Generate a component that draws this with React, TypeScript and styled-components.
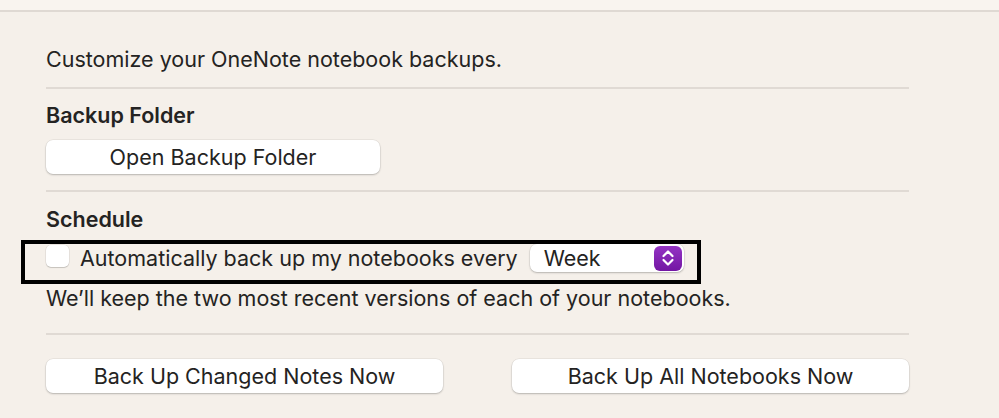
import { FC } from 'react';
import styled, { createGlobalStyle } from 'styled-components';

const GlobalStyle = createGlobalStyle`
  html, body {
    margin: 0;
    padding: 0;
    background: #f5f0ea;
  }
  body {
    font-family: Inter, "Noto Sans", sans-serif;
    color: #242322;
    -webkit-font-smoothing: antialiased;
  }
`;

const App: FC = () => {
  return (
    <Page>
      <GlobalStyle />
      <TopBand />
      <Content>
        <Intro>Customize your OneNote notebook backups.</Intro>
        <Divider />
        <SectionTitle>Backup Folder</SectionTitle>
        <PushButton $width="334px">Open Backup Folder</PushButton>
        <Divider $top="16px" />
        <SectionTitle $top="13px">Schedule</SectionTitle>
        <Highlight>
          <Checkbox type="checkbox" />
          <RowLabel>Automatically back up my notebooks every</RowLabel>
          <Select>
            <SelectValue>Week</SelectValue>
            <Stepper>
              <svg width="16" height="20" viewBox="0 0 16 20" fill="none">
                <path d="M3.5 8 L8 3.5 L12.5 8" stroke="#fff" strokeWidth="2.2" strokeLinecap="round" strokeLinejoin="round" />
                <path d="M3.5 12 L8 16.5 L12.5 12" stroke="#fff" strokeWidth="2.2" strokeLinecap="round" strokeLinejoin="round" />
              </svg>
            </Stepper>
          </Select>
        </Highlight>
        <Note>We’ll keep the two most recent versions of each of your notebooks.</Note>
        <Divider $top="21px" />
        <Actions>
          <PushButton>Back Up Changed Notes Now</PushButton>
          <PushButton>Back Up All Notebooks Now</PushButton>
        </Actions>
      </Content>
    </Page>
  );
};

export default App;

const Page = styled.div`
  width: 999px;
  height: 418px;
  overflow: hidden;
  background: #f5f0ea;
`;

const TopBand = styled.div`
  height: 10px;
  background: #f9f4ef;
  border-bottom: 2px solid #dfd9d3;
`;

const Content = styled.div`
  width: 863px;
  padding: 33px 0 0 46px;
  display: flex;
  flex-direction: column;
  align-items: flex-start;
`;

const Intro = styled.p`
  margin: 0;
  font-size: 21.5px;
  line-height: 28px;
`;

const Divider = styled.hr<{ $top?: string }>`
  align-self: stretch;
  margin: ${({ $top }) => $top ?? '14px'} 0 0;
  border: none;
  height: 2px;
  background: #e0dad4;
`;

const SectionTitle = styled.h3<{ $top?: string }>`
  margin: ${({ $top }) => $top ?? '12px'} 0 0;
  font-size: 21.5px;
  line-height: 28px;
  font-weight: 600;
`;

const PushButton = styled.button<{ $width?: string }>`
  width: ${({ $width }) => $width ?? '100%'};
  height: 34px;
  margin-top: 11px;
  padding: 0;
  background: #fff;
  border: none;
  border-radius: 7px;
  box-shadow: 0 0 0 0.5px rgba(0, 0, 0, 0.08), 0 1px 2px rgba(0, 0, 0, 0.22);
  font-family: inherit;
  font-size: 21.5px;
  color: #242322;
`;

const Highlight = styled.div`
  margin: 7px 0 0 -25px;
  display: flex;
  align-items: flex-start;
  padding: 0 13px 8px 21px;
  border: 4px solid #000;
`;

const Checkbox = styled.input`
  appearance: none;
  flex-shrink: 0;
  margin: 1px 0 0;
  width: 23px;
  height: 22px;
  background: #fff;
  border-radius: 5px;
  box-shadow: 0 0 0 0.5px rgba(0, 0, 0, 0.1), 0 1px 1px rgba(0, 0, 0, 0.15);
`;

const RowLabel = styled.span`
  margin: 1px 0 0 11px;
  font-size: 21.5px;
  line-height: 26px;
  white-space: nowrap;
`;

const Select = styled.div`
  flex-shrink: 0;
  margin-left: 12px;
  width: 154px;
  height: 28px;
  display: flex;
  align-items: center;
  justify-content: space-between;
  padding: 0 2px 0 14px;
  box-sizing: border-box;
  background: #fff;
  border-radius: 7px;
  box-shadow: 0 0 0 0.5px rgba(0, 0, 0, 0.08), 0 1px 2px rgba(0, 0, 0, 0.22);
`;

const SelectValue = styled.span`
  font-size: 21.5px;
`;

const Stepper = styled.div`
  flex-shrink: 0;
  width: 28px;
  height: 25px;
  border-radius: 6px;
  background: linear-gradient(#9434c4, #7316a3);
  display: flex;
  align-items: center;
  justify-content: center;
`;

const Note = styled.p`
  margin: 0;
  font-size: 21.5px;
  line-height: 28px;
`;

const Actions = styled.div`
  align-self: stretch;
  margin-top: 13px;
  display: grid;
  grid-template-columns: 1fr 1fr;
  column-gap: 69px;
`;
